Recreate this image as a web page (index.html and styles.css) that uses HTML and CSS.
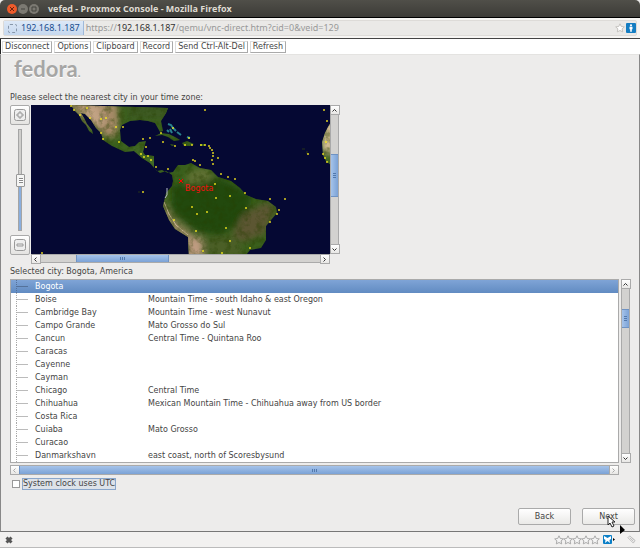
FILE: index.html
```
<!DOCTYPE html>
<html lang="en">
<head>
    <meta charset="UTF-8">
    <meta name="viewport" content="width=device-width, initial-scale=1.0">
    <title>vefed - Proxmox Console - Mozilla Firefox</title>
    <link rel="stylesheet" href="styles.css">
</head>
<body>

<header class="titlebar">
    <button class="win-btn close" aria-label="Close"><svg viewBox="0 0 10 10"><path d="M3 3l4 4M7 3l-4 4"/></svg></button>
    <button class="win-btn" aria-label="Minimize"><svg viewBox="0 0 10 10"><path d="M3 5h4"/></svg></button>
    <button class="win-btn" aria-label="Maximize"><svg viewBox="0 0 10 10"><path d="M3 3h4v4h-4z"/></svg></button>
    <h1>vefed - Proxmox Console - Mozilla Firefox</h1>
</header>

<div class="navbar">
    <div class="address">
        <button class="site"><span class="favicon"></span>192.168.1.187</button>
        <a class="url" href="#">https://<b>192.168.1.187</b>/qemu/vnc-direct.htm?cid=0&amp;veid=129</a>
        <svg class="star" viewBox="0 0 10 10"><path d="M5 .8l1.3 2.7 3 .4-2.2 2 .6 3L5 7.500l-2.700 1.400.6-3-2.200-2 3-.4z"/></svg>
        <svg class="info" viewBox="0 0 10 10"><rect width="10" height="10" rx="1"/><circle cx="5" cy="2.300" r="1.100"/><path d="M3.500 3.800h3v2.500h-.7v2.500H4.200V6.300h-.7z"/></svg>
    </div>
</div>

<nav class="toolbar">
    <button>Disconnect</button>
    <button>Options</button>
    <button>Clipboard</button>
    <button>Record</button>
    <button>Send Ctrl-Alt-Del</button>
    <button>Refresh</button>
</nav>

<main class="installer">
    <div class="logo">
        <!-- fedora wordmark -->
        <span>fedora</span><span class="dot">.</span>
    </div>

    <label class="prompt" for="zoom">Please select the nearest city in your time zone:</label>

    <div class="map-area">
        <div class="zoom">
            <button aria-label="Zoom in"><svg viewBox="0 0 12 12"><rect x=".5" y=".5" width="11" height="11" rx="2"/><path d="M5 3h2v2h2v2H7v2H5V7H3V5h2z"/></svg></button>
            <input type="range" id="zoom" min="0" max="100" value="50">
            <button aria-label="Zoom out"><svg viewBox="0 0 12 12"><rect x=".5" y=".5" width="11" height="11" rx="2"/><path d="M3 5h6v2H3z"/></svg></button>
        </div>
        <div class="map-frame">
            <svg class="map" viewBox="31 105 299 149" preserveAspectRatio="xMidYMid slice">
                <defs>
                    <filter id="soft" x="-30%" y="-30%" width="160%" height="160%"><feGaussianBlur stdDeviation="3"/></filter>
                    <filter id="grain" x="0" y="0" width="100%" height="100%">
                        <feTurbulence type="fractalNoise" baseFrequency=".16" numOctaves="4" seed="4"/>
                        <feColorMatrix values="0 0 0 0 .02  0 0 0 0 .05  0 0 0 0 0  3 0 0 0 -1.300"/>
                    </filter>
                    <clipPath id="land">
                        <path d="M71 105l3 5 5 5 3 6 4 4 3 6 4 3-1-4-5-6-3-6-3-5 4 1 6 6 5 8 5 5 2 7 9 6 13 6 9-1 8 7 8 5 5 6 5 4 6-2 6 4 1 6-1 5-6 7-3 13 6 14 6 9 13 8 1 22h54l7-9 11-2 5-8v-14l5-6 6-7-1-6-8-6-12-2-10-4-6-7-9-7-13-4-7-7-11-2-9-5-6 2-7 0-5 7-5 1-6-3-5 1-3-3v-12l-9-1-2-3 3-11-7 1-4 4-6 1-8-6-1-11 2-5 8-4 10-1 8 1 7 2 5 9 3-1-2-10 5-8 2-5z"/>
                        <path d="M331 122l-3 5-3 6-3 9 1 13 3 6 5 4z"/>
                        <path d="M155 136l6-3 8 1 6 3 5 3-6 1-6-4-6-2zM182 143l5-2 7 3-4 2-6 0zM170 144l5 1-3 1zM200 144h5v2h-5z"/>
                    </clipPath>
                </defs>
                <rect x="31" y="105" width="299" height="149" fill="#050833"/>
                <g clip-path="url(#land)">
                    <rect x="31" y="105" width="300" height="149" fill="#3a5f1c"/>
                    <g filter="url(#soft)">
                        <path d="M65 100h52l2 20-2 16-8 2-24-16z" fill="#a58a66"/>
                        <path d="M80 105l18 0 8 20-12 0z" fill="#c2a384"/>
                        <path d="M128 100h45v20h-45z" fill="#3d5a22"/>
                        <path d="M120 143l20 5 15 12 8 10-10-3z" fill="#47702a"/>
                        <path d="M172 185l48-7 32 16-4 22-28 20-26-6-22-20z" fill="#23490d"/>
                        <path d="M189 171l16-4 10 9-8 6-22 4z" fill="#5f6f33"/>
                        <path d="M242 215l24-13 10 6-12 26-20 8-12-6z" fill="#5c5730"/>
                        <path d="M205 238l30-2 10 20h-38z" fill="#4b5e26"/>
                        <path d="M160 196l12 22 20 16 5 24h-13l-3-20-21-22z" fill="#a28a68"/>
                        <path d="M191 237l11 0 2 20h-14z" fill="#c09c82"/>
                        <path d="M322 118h12v34h-12z" fill="#dcc29b"/>
                        <path d="M322 154h10v12h-10z" fill="#446b20"/>
                    </g>
                    <path d="M164 202l5 12 7 11 12 10" fill="none" stroke="#cbb694" stroke-width="1"/>
                    <rect x="31" y="105" width="300" height="149" filter="url(#grain)" opacity=".4"/>
                </g>
                <path d="M168 124l3 1 2 3 3 3M170 129l2 4M177 132l4 3M187 137l3 1M167 130l2 2" fill="none" stroke="#28808c" stroke-width="2"/>
                <path d="M167 188v7l-2 3" fill="none" stroke="#b9bccb"/>
                <path d="M302 149h3M307 151v3M138 192h2" stroke="#26331b"/>
                <g id="cities" fill="#fff01c"></g>
                <path class="cross" d="M179 179l4 4M183 179l-4 4"/>
                <text class="city-name" x="185" y="191">Bogota</text>
            </svg>
            <div class="scroll vertical map-v">
                <button aria-label="Scroll up"><svg viewBox="0 0 7 7"><path d="M1.500 4.500l2-2 2 2"/></svg></button>
                <div class="track"><span class="thumb"></span></div>
                <button aria-label="Scroll down"><svg viewBox="0 0 7 7"><path d="M1.500 2.500l2 2 2-2"/></svg></button>
            </div>
            <div class="scroll map-h">
                <button aria-label="Scroll left"><svg viewBox="0 0 7 7"><path d="M4.500 1.500l-2 2 2 2"/></svg></button>
                <div class="track"><span class="thumb"></span></div>
                <button aria-label="Scroll right"><svg viewBox="0 0 7 7"><path d="M2.500 1.500l2 2-2 2"/></svg></button>
            </div>
        </div>
    </div>

    <p class="selected-city">Selected city: Bogota, America</p>

    <div class="list-frame">
        <div class="list">
            <table>
                <tbody>
                    <tr class="active"><td>Bogota</td><td></td></tr>
                    <tr><td>Boise</td><td>Mountain Time - south Idaho &amp; east Oregon</td></tr>
                    <tr><td>Cambridge Bay</td><td>Mountain Time - west Nunavut</td></tr>
                    <tr><td>Campo Grande</td><td>Mato Grosso do Sul</td></tr>
                    <tr><td>Cancun</td><td>Central Time - Quintana Roo</td></tr>
                    <tr><td>Caracas</td><td></td></tr>
                    <tr><td>Cayenne</td><td></td></tr>
                    <tr><td>Cayman</td><td></td></tr>
                    <tr><td>Chicago</td><td>Central Time</td></tr>
                    <tr><td>Chihuahua</td><td>Mexican Mountain Time - Chihuahua away from US border</td></tr>
                    <tr><td>Costa Rica</td><td></td></tr>
                    <tr><td>Cuiaba</td><td>Mato Grosso</td></tr>
                    <tr><td>Curacao</td><td></td></tr>
                    <tr><td>Danmarkshavn</td><td>east coast, north of Scoresbysund</td></tr>
                </tbody>
            </table>
        </div>
        <div class="scroll vertical list-v">
            <button aria-label="Scroll up"><svg viewBox="0 0 7 7"><path d="M1.500 4.500l2-2 2 2"/></svg></button>
            <div class="track"><span class="thumb"></span></div>
            <button aria-label="Scroll down"><svg viewBox="0 0 7 7"><path d="M1.500 2.500l2 2 2-2"/></svg></button>
        </div>
        <div class="scroll list-h">
            <button aria-label="Scroll left" disabled><svg viewBox="0 0 7 7"><path d="M4.500 1.500l-2 2 2 2"/></svg></button>
            <div class="track"><span class="thumb"></span></div>
            <button aria-label="Scroll right" disabled><svg viewBox="0 0 7 7"><path d="M2.500 1.500l2 2-2 2"/></svg></button>
        </div>
    </div>

    <div class="utc">
        <input type="checkbox" id="utc">
        <label for="utc">System clock uses UTC</label>
    </div>

    <div class="actions">
        <button>Back</button>
        <button class="next">Next
            <svg class="pointer" viewBox="0 0 18 20">
                <path d="M1 1v9l2-2 2 4 2-1-2-4h3z" fill="#fff" stroke="#222"/>
                <path d="M13 10v9l5-4z" fill="#000"/>
            </svg>
        </button>
    </div>
</main>

<footer class="statusbar">
    <button class="stop" aria-label="Stop"><svg viewBox="0 0 8 8"><path d="M1.500 1.500l5 5M6.500 1.500l-5 5"/></svg></button>
    <div class="rating" id="rating"></div>
    <svg class="addon" viewBox="0 0 12 9"><rect width="9" height="9" rx="1" fill="#0b7fc7"/><path d="M1 1l3.500 2L8 1v3L6.500 5 7 8 4.500 6 2 8l.5-3L1 4z" fill="#fff"/><path d="M10 3l2 1.500-2 1.500z" fill="#000"/></svg>
    <svg class="clip" viewBox="0 0 10 10"><path d="M1 3l2-2 6 5-2 3zM3 3l4 4M5 3l3 3"/></svg>
</footer>

<script>
    // city markers on the map
    const cities = [
        [71,106],[87,108],[74,110],[80,115],[90,118],[101,119],[106,118],[116,127],[123,127],[101,133],[103,139],
        [119,142],[143,139],[150,138],[146,147],[141,154],[144,157],[148,156],[151,160],[156,167],[168,169],
        [161,133],[163,142],[173,128],[175,146],[143,192],[42,253],[174,220],[185,145],[192,145],[189,138],[201,145],[205,145],
        [209,146],[210,148],[212,150],[213,153],[213,156],[212,160],[213,164],[218,158],[193,160],[195,161],[200,165],
        [205,110],[324,110],[327,121],[308,154],[323,154],[325,158],[327,162],[326,142],[221,174],[228,177],[235,179],
        [245,193],[230,196],[216,198],[215,184],[192,207],[197,214],[207,212],[246,208],[270,199],[285,199],
        [279,210],[277,214],[270,222],[226,228],[230,241],[250,248],[196,231],[203,251],[222,253]
    ];
    document.getElementById("cities").innerHTML =
        cities.map(([x, y]) => `<rect x="${x - .8}" y="${y - .8}" width="1.600" height="1.600"/>`).join("");

    document.getElementById("rating").innerHTML =
        '<svg viewBox="0 0 10 10"><path d="M5 .8l1.300 2.700 3 .4-2.200 2 .6 3L5 7.500 2.300 8.900l.6-3-2.200-2 3-.4z"/></svg>'.repeat(5);
</script>

</body>
</html>
```
FILE: styles.css
```
* {
    box-sizing: border-box;
}
body {
    margin: 0;
    min-height: 100vh;
    display: flex;
    flex-direction: column;
    background-color: #edeceb;
    color: #444;
    font-family: "DejaVu Sans", sans-serif;
    font-size: 8px;
    line-height: 10px;
}
button {
    font: inherit;
    color: inherit;
    padding: 0;
    border: none;
    background: none;
}
svg {
    display: block;
    fill: none;
}

/* window chrome */
.titlebar {
    height: 18px;
    display: flex;
    align-items: center;
    gap: 1px;
    padding-left: 7px;
    background: linear-gradient(#504f49, #3c3b37);
    border-bottom: 1px solid #000;
    border-radius: 5px 5px 0 0;
}
.titlebar h1 {
    margin: 0 0 0 8px;
    font-family: "Open Sans", sans-serif;
    font-size: 9px;
    color: #dfdbd2;
}
.win-btn {
    width: 10px;
    height: 10px;
    border-radius: 50%;
    background-color: #7b7972;
}
.win-btn svg {
    stroke: #45443e;
}
.win-btn.close {
    background-color: #ee5b2b;
}
.win-btn.close svg {
    stroke: #6b2410;
}
.navbar {
    padding: 2px 3px;
    background-color: #f6f5f3;
    border-bottom: 1px solid #444;
}
.address {
    height: 16px;
    display: flex;
    align-items: center;
    gap: 1px;
    background-color: #eae9e7;
    border: 1px solid #dddbd8;
    border-radius: 2px;
    font-family: "Noto Sans", sans-serif;
    font-size: 9px;
}
.site {
    height: 14px;
    display: flex;
    align-items: center;
    gap: 4px;
    padding: 0 3px 0 4px;
    color: #1c4f8f;
    background: linear-gradient(#dce8f7, #c6d8ee);
    border-right: 1px solid #9fb9da;
}
.favicon {
    width: 9px;
    height: 9px;
    border: 1px dashed #8797aa;
    border-radius: 2px;
}
.url {
    flex: 1;
    margin-left: 1px;
    color: #999;
    text-decoration: none;
}
.url b {
    font-weight: normal;
    color: #333;
}
.star,
.info {
    width: 10px;
    height: 10px;
}
.star {
    fill: #fff;
    stroke: #c4c2be;
}
.info {
    fill: #fff;
}
.info rect {
    fill: #147dc2;
}
.toolbar {
    height: 15px;
    display: flex;
    align-items: center;
    gap: 2px;
    padding: 0 1px;
    background-color: #fff;
    border-left: 1px solid #222;
}
.toolbar button {
    height: 12px;
    padding: 0 2px;
    line-height: 10px;
    border: 1px solid #ddd;
    border-right-color: #aaa;
    border-bottom-color: #aaa;
    background-color: #fff;
}

/* installer page */
.installer {
    flex: 1;
    display: flex;
    flex-direction: column;
    padding: 4px 9px 6px;
    border: 1px solid #888;
    border-top-color: #e4e3e1;
    border-bottom-color: #777;
}
.logo {
    margin-bottom: 10px;
    padding-left: 4px;
    font-family: Lato, sans-serif;
    font-size: 22px;
    font-weight: bold;
    line-height: 20px;
    color: #a6a6a5;
    text-shadow: 0 1px #fff;
}
.logo .dot {
    font-size: 12px;
}
.prompt,
.selected-city {
    margin: 0;
    line-height: 10px;
}
.map-area {
    display: flex;
    gap: 1px;
    margin: 2px 0 4px;
}
.zoom {
    width: 20px;
    display: flex;
    flex-direction: column;
    align-items: center;
    gap: 4px;
    height: 150px;
}
.zoom button {
    width: 20px;
    height: 20px;
    display: flex;
    align-items: center;
    justify-content: center;
    border: 1px solid #aaa;
    border-radius: 2px;
    background: linear-gradient(#fff, #e4e3e1);
}
.zoom button svg {
    width: 12px;
    height: 12px;
    fill: #eee;
    stroke: #999;
}
.zoom input {
    flex: 1;
    min-height: 0;
    width: 9px;
    margin: 0;
    writing-mode: vertical-lr;
    direction: rtl;
    appearance: none;
    background: none;
}
.zoom input::-webkit-slider-runnable-track {
    width: 4px;
    margin: 0 auto;
    background: linear-gradient(#cfcecc 50%, #8aaedd 50%);
    border: 1px solid #a5a5a5;
}
.zoom input::-webkit-slider-thumb {
    appearance: none;
    width: 9px;
    height: 13px;
    margin-left: -3px;
    border: 1px solid #999;
    border-radius: 1px;
    background: repeating-linear-gradient(#888 0 1px, #fff 1px 2px) center / 4px 5px no-repeat, #f5f5f4;
}
.map-frame {
    width: 48%;
    min-width: 308px;
    max-width: 309px;
    display: grid;
    grid-template-columns: 1fr 9px;
    grid-template-rows: 149px 9px;
}
.map {
    width: 100%;
    height: 149px;
}
.cross {
    stroke: #f00;
}
.city-name {
    fill: #f21010;
    font-size: 8px;
}

/* scrollbars */
.scroll {
    display: flex;
    background-color: #d3d2d0;
    border: 1px solid #aaa;
    border-radius: 1px;
}
.scroll button {
    flex: none;
    width: 8px;
    height: 8px;
    background: linear-gradient(#fff, #e8e7e5);
    box-shadow: 0 0 0 1px #aaa;
}
.scroll button svg {
    width: 7px;
    height: 7px;
    stroke: #333;
}
.scroll button:disabled svg {
    stroke: #aaa;
}
.vertical {
    flex-direction: column;
}
.track {
    flex: 1;
    display: grid;
}
.thumb {
    background:
        repeating-linear-gradient(90deg, #5279ad 0 1px, transparent 1px 2px) center / 5px 3px no-repeat,
        linear-gradient(#a5c3ea, #7ba2d6);
    border: solid #6f93c4;
    border-width: 0 1px;
}
.vertical .thumb {
    background:
        repeating-linear-gradient(#5279ad 0 1px, transparent 1px 2px) center / 3px 5px no-repeat,
        linear-gradient(90deg, #a5c3ea, #7ba2d6);
    border-width: 1px 0;
}
.map-v .track {
    grid-template-rows: 40fr 43fr 48fr;
}
.map-h .track {
    grid-template-columns: 36fr 93fr 152fr;
}
.list-v .track {
    grid-template-rows: 21fr 19fr 126fr;
}
.map-v .thumb,
.list-v .thumb {
    grid-row: 2;
}
.map-h .thumb {
    grid-column: 2;
}

/* city list */
.list-frame {
    display: grid;
    grid-template-columns: 1fr 9px;
    grid-template-rows: auto 10px;
    gap: 2px;
    margin: 2px 0 3px;
}
.list {
    background-color: #fff;
    border: 1px solid #aaa;
}
table {
    width: 100%;
    border-collapse: collapse;
    table-layout: fixed;
}
td {
    height: 13px;
    padding: 0;
    line-height: 13px;
    white-space: nowrap;
}
td:first-child {
    width: 137px;
    padding-left: 24px;
    background:
        repeating-linear-gradient(#aaa 0 1px, transparent 1px 2px) 5px 0 / 1px 100% no-repeat,
        linear-gradient(#bbb, #bbb) 6px 6px / 11px 1px no-repeat;
}
.active {
    color: #fff;
    background: linear-gradient(#7fa4d6, #618bc2);
}
.active td:first-child {
    background:
        repeating-linear-gradient(#55729b 0 1px, transparent 1px 2px) 5px 0 / 1px 100% no-repeat,
        linear-gradient(#55729b, #55729b) 6px 6px / 11px 1px no-repeat;
}
.utc {
    display: flex;
    align-items: center;
    gap: 2px;
    padding-left: 2px;
}
.utc input {
    appearance: none;
    width: 8px;
    height: 8px;
    margin: 0;
    background-color: #fff;
    border: 1px solid #999;
}
.utc label {
    border: 1px solid #8aa6cb;
    background-color: #dde2e9;
}
.actions {
    display: flex;
    justify-content: flex-end;
    gap: 11px;
    margin-top: auto;
    margin-right: -5px;
}
.actions button {
    position: relative;
    width: 53px;
    height: 17px;
    border: 1px solid #aaa;
    border-radius: 2px;
    background: linear-gradient(#fff, #eae9e7);
}
.pointer {
    position: absolute;
    left: 24px;
    top: 6px;
    width: 18px;
    height: 20px;
    z-index: 1;
}

/* status bar */
.statusbar {
    height: 16px;
    display: flex;
    align-items: center;
    padding: 0 4px 0 5px;
    background-color: #f2f1f0;
    border-bottom: 1px solid #bbb;
}
.stop svg {
    width: 8px;
    height: 8px;
    stroke: #555;
    stroke-width: 3;
}
.rating {
    display: flex;
    margin-left: auto;
}
.rating svg {
    width: 10px;
    height: 10px;
    fill: #f4f4f4;
    stroke: #aaa;
}
.rating svg + svg {
    margin-left: -1px;
}
.addon {
    width: 12px;
    height: 9px;
    margin: 0 12px 0 3px;
}
.clip {
    width: 9px;
    height: 9px;
    stroke: #bbb;
}
```
